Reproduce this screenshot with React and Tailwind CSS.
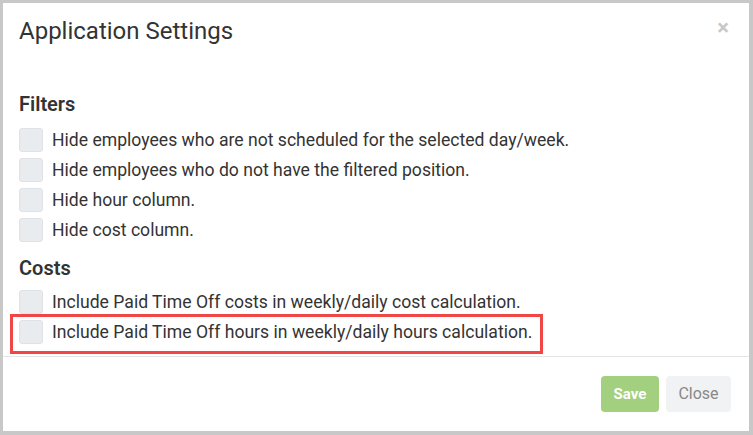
export default function App() {
  const filters = [
    "Hide employees who are not scheduled for the selected day/week.",
    "Hide employees who do not have the filtered position.",
    "Hide hour column.",
    "Hide cost column.",
  ];
  const Row = ({ text }) => (
    <div className="flex items-center h-[30px]">
      <div className="w-[24px] h-[24px] rounded-[3px] bg-[#e9ecef] border border-[#dfe2e6] shrink-0" />
      <span className="ml-[9px] text-[17.6px] leading-[24px] text-[#333]">{text}</span>
    </div>
  );
  return (
    <div
      className="w-[753px] h-[435px] bg-[#c8c8c8] pt-[3px] pl-[3px] pr-[4px] pb-[4px]"
      style={{ fontFamily: "Roboto, 'Liberation Sans', sans-serif" }}
    >
      <div className="w-full h-full bg-white flex flex-col">
        <div className="relative h-[62px] pl-[16px] pt-[13px]">
          <h1 className="text-[24px] leading-[30px] text-[#333] font-normal">Application Settings</h1>
          <span className="absolute right-[20px] top-[13px] text-[22px] leading-[24px] font-bold text-[#c8c8c8]">×</span>
        </div>
        <div className="pl-[16px] pt-[26px] relative">
          <h2 className="text-[20px] font-semibold text-[#333] leading-[26px]">Filters</h2>
          <div className="mt-[8px] flex flex-col">
            {filters.map((f) => (
              <Row key={f} text={f} />
            ))}
          </div>
          <h2 className="mt-[10px] text-[20px] font-semibold text-[#333] leading-[26px]">Costs</h2>
          <div className="mt-[6px] flex flex-col">
            <Row text="Include Paid Time Off costs in weekly/daily cost calculation." />
            <div className="relative">
              <Row text="Include Paid Time Off hours in weekly/daily hours calculation." />
              <div className="absolute left-[-9px] top-[-3px] w-[533px] h-[40px] border-[3px] border-[#f04646]" />
            </div>
          </div>
        </div>
        <div className="mt-[9px] border-t border-[#e5e5e5] flex-1 flex items-start justify-end pt-[19px] pr-[18px] gap-[7px]">
          <button className="h-[36px] w-[58px] rounded-[4px] bg-[#a3d07e] text-white text-[15px] font-bold">Save</button>
          <button className="h-[36px] w-[65px] rounded-[4px] bg-[#f1f2f4] text-[#888] text-[16px]">Close</button>
        </div>
      </div>
    </div>
  );
}
